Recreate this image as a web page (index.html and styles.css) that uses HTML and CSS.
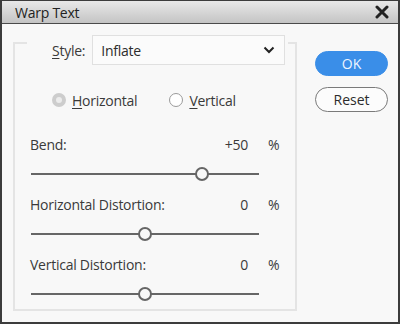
FILE: index.html
```
<!DOCTYPE html>
<html lang="en">
<head>
    <meta charset="UTF-8">
    <title>Warp Text</title>
    <link rel="stylesheet" href="styles.css">
</head>
<body>
    <div class="dialog">
        <div class="titlebar">
            <span class="title">Warp Text</span>
            <svg class="close" width="14" height="14" viewBox="0 0 14 14">
                <path d="M2 2 L12 12 M12 2 L2 12" stroke="#222" stroke-width="3" stroke-linecap="round"/>
            </svg>
        </div>
        <div class="content">
            <fieldset class="group">
                <legend class="style-row">
                    <span class="style-label"><u>S</u>tyle:</span>
                    <div class="select">
                        <span>Inflate</span>
                        <svg width="12" height="8" viewBox="0 0 12 8">
                            <path d="M1.5 1.5 L6 6 L10.5 1.5" fill="none" stroke="#222" stroke-width="2"/>
                        </svg>
                    </div>
                </legend>

                <div class="radios">
                    <label class="radio"><span class="dot checked"></span><span><u>H</u>orizontal</span></label>
                    <label class="radio"><span class="dot"></span><span><u>V</u>ertical</span></label>
                </div>

                <div class="field">
                    <span class="name">Bend:</span>
                    <span class="value">+50</span>
                    <span class="pct">%</span>
                </div>
                <div class="slider">
                    <div class="track"></div>
                    <div class="thumb" style="left: 75%"></div>
                </div>

                <div class="field">
                    <span class="name">Horizontal Distortion:</span>
                    <span class="value">0</span>
                    <span class="pct">%</span>
                </div>
                <div class="slider">
                    <div class="track"></div>
                    <div class="thumb" style="left: 50%"></div>
                </div>

                <div class="field">
                    <span class="name">Vertical Distortion:</span>
                    <span class="value">0</span>
                    <span class="pct">%</span>
                </div>
                <div class="slider">
                    <div class="track"></div>
                    <div class="thumb" style="left: 50%"></div>
                </div>
            </fieldset>

            <div class="actions">
                <button type="button" class="btn primary">OK</button>
                <button type="button" class="btn">Reset</button>
            </div>
        </div>
    </div>
</body>
</html>
```

FILE: styles.css
```
body {
    margin: 0;
    padding: 0;
    background-color: #ffffff;
    font-family: "Open Sans", "Noto Sans", sans-serif;
    font-size: 13px;
    letter-spacing: -0.25px;
    color: #3a3a3a;
}
u {
    text-decoration-thickness: 1px;
    text-underline-offset: 2px;
}
.dialog {
    width: 400px;
    height: 324px;
    box-sizing: border-box;
    border: 2px solid #3c3c3c;
    border-top-width: 1px;
    background-color: #f8f8f8;
}
.titlebar {
    height: 22px;
    display: flex;
    align-items: center;
    justify-content: space-between;
    padding: 0 9px 0 13px;
    background: linear-gradient(#e8e8e8, #c4c4c4);
    border-bottom: 1px solid #4a4a4a;
}
.title {
    font-size: 14px;
    color: #222222;
}
.content {
    display: flex;
    align-items: flex-start;
    padding: 11px 0 0 11px;
}
.group {
    flex: none;
    width: 284px;
    min-width: 0;
    height: 276px;
    box-sizing: border-box;
    margin: 0;
    padding: 39px 15px 0 15px;
    border: 2px solid #e4e4e4;
}
.style-row {
    display: flex;
    align-items: flex-start;
    width: 261px;
    height: 16px;
    box-sizing: border-box;
    margin-left: -3px;
    padding: 0 3px 0 25px;
}
.style-label {
    line-height: 30px;
    margin-top: 1px;
    font-size: 14px;
}
.select {
    display: flex;
    flex: none;
    align-items: center;
    justify-content: space-between;
    width: 193px;
    height: 30px;
    box-sizing: border-box;
    margin-left: 7px;
    padding: 0 9px 0 8px;
    border: 1px solid #e0e0e0;
    background-color: #fbfbfb;
    font-size: 14px;
    color: #2c2c2c;
}
.radios {
    display: flex;
    align-items: center;
    height: 20px;
    padding-left: 22px;
    gap: 32px;
    font-size: 14px;
}
.radio {
    display: flex;
    align-items: center;
    gap: 6px;
}
.dot {
    width: 14px;
    height: 14px;
    box-sizing: border-box;
    border: 1px solid #9a9a9a;
    border-radius: 50%;
    background-color: #ffffff;
}
.dot.checked {
    border: 4px solid #cdcdcd;
    background-color: #ececec;
}
.field {
    display: flex;
    align-items: center;
    height: 30px;
    font-size: 14px;
}
.radios + .field {
    margin-top: 19px;
}
.name {
    flex: 1;
}
.value {
    margin-right: 20px;
}
.pct {
    width: 12px;
}
.slider {
    position: relative;
    width: 228px;
    height: 30px;
    margin-left: 1px;
}
.track {
    position: absolute;
    left: 0;
    right: 0;
    top: 14px;
    height: 2px;
    background-color: #666666;
}
.thumb {
    position: absolute;
    top: 8px;
    width: 14px;
    height: 14px;
    margin-left: -7px;
    box-sizing: border-box;
    border: 2px solid #666666;
    border-radius: 50%;
    background-color: #f8f8f8;
}
.actions {
    display: flex;
    flex-direction: column;
    gap: 11px;
    margin: 16px 0 0 18px;
}
.btn {
    width: 73px;
    height: 25px;
    border: 1.5px solid #7a7a7a;
    border-radius: 13px;
    background-color: #fcfcfc;
    font-family: "Open Sans", "Noto Sans", sans-serif;
    font-size: 14px;
    color: #2c2c2c;
    padding: 0;
}
.btn.primary {
    border-color: #3a8ee8;
    background-color: #3a8ee8;
    color: #eef5ff;
}
```
